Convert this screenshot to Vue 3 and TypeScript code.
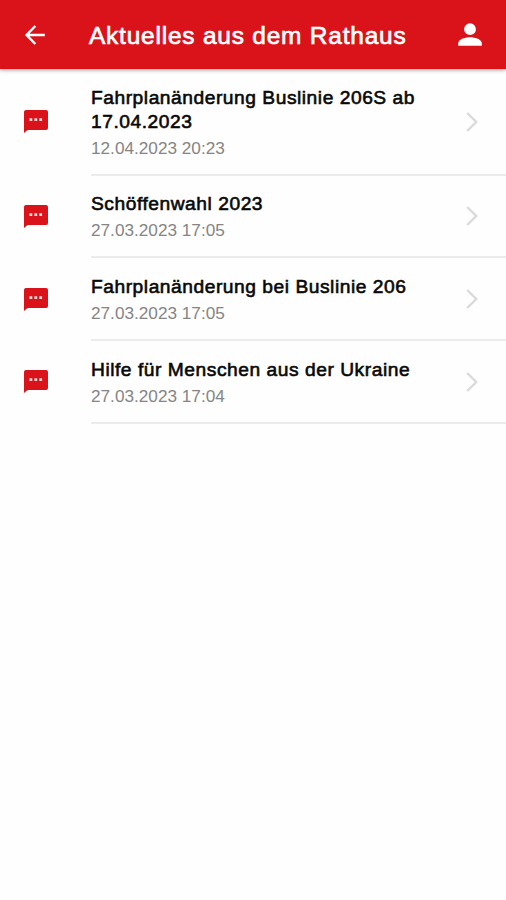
<script setup lang="ts">
interface NewsItem {
  id: number
  title: string
  date: string
}

const items: NewsItem[] = [
  { id: 1, title: 'Fahrplanänderung Buslinie 206S ab 17.04.2023', date: '12.04.2023 20:23' },
  { id: 2, title: 'Schöffenwahl 2023', date: '27.03.2023 17:05' },
  { id: 3, title: 'Fahrplanänderung bei Buslinie 206', date: '27.03.2023 17:05' },
  { id: 4, title: 'Hilfe für Menschen aus der Ukraine', date: '27.03.2023 17:04' },
]
</script>

<template>
  <div class="screen">
    <header class="bar">
      <button class="icon-button" aria-label="Zurück">
        <svg class="back" viewBox="0 0 22 22">
          <path d="M20.8 11H3M11.3 2L2.6 11L11.3 20" fill="none" stroke="currentColor" stroke-width="2.5" />
        </svg>
      </button>
      <h1 class="heading">Aktuelles aus dem Rathaus</h1>
      <button class="icon-button" aria-label="Profil">
        <svg class="person" viewBox="0 0 24 24">
          <circle cx="12" cy="6.2" r="5.9" fill="currentColor" />
          <path d="M0.2 22.7V20.3C0.2 16.5 6.5 14.3 12 14.3S23.8 16.5 23.8 20.3V22.7Z" fill="currentColor" />
        </svg>
      </button>
    </header>
    <ul class="list">
      <li v-for="item in items" :key="item.id" class="row">
        <svg class="bubble" viewBox="0 0 24 23">
          <path d="M2 0H22Q24 0 24 2V18Q24 20 22 20H3.5L0 23V2Q0 0 2 0Z" fill="#da121a" />
          <path d="M5.5 8.3H8.3V11H5.5ZM10.4 8.3H13.2V11H10.4ZM15.3 8.3H18.1V11H15.3Z" fill="#ffdcdc" />
        </svg>
        <div class="body">
          <div class="text">
            <h2 class="title">{{ item.title }}</h2>
            <p class="date">{{ item.date }}</p>
          </div>
          <svg class="chevron" viewBox="0 0 12 20">
            <path d="M1.2 1L10.2 10L1.2 19" fill="none" stroke="#dadadb" stroke-width="2.4" />
          </svg>
        </div>
      </li>
    </ul>
  </div>
</template>

<style>
body {
  margin: 0;
  background: #fefefe;
}
</style>

<style scoped>
.screen {
  min-height: 900px;
  background: #fefefe;
  font-family: "Liberation Sans", Arial, sans-serif;
}
.bar {
  display: flex;
  align-items: center;
  box-sizing: border-box;
  height: 69px;
  padding: 1px 24px 0;
  background: #da121a;
  color: #fff;
  box-shadow: 0 1px 4px rgba(0, 0, 0, 0.4);
}
.icon-button {
  display: flex;
  padding: 0;
  border: 0;
  background: none;
  color: inherit;
}
.back {
  width: 22px;
  height: 22px;
}
.person {
  width: 24px;
  height: 24px;
}
.heading {
  flex: 1;
  margin: 1px 0 0 43px;
  font-size: 24.4px;
  font-weight: 400;
  line-height: 30px;
  letter-spacing: 0.82px;
  white-space: nowrap;
  -webkit-text-stroke: 0.7px currentColor;
}
.list {
  margin: 0;
  padding: 0;
  list-style: none;
}
.row {
  display: flex;
  align-items: center;
  padding-left: 24px;
}
.bubble {
  flex: none;
  width: 24px;
  height: 23px;
  margin: 0 43px 1px 0;
}
.body {
  flex: 1;
  display: flex;
  align-items: center;
  box-sizing: border-box;
  padding: 16.8px 28px 15px 0;
  border-bottom: 2px solid #ececec;
}
.text {
  flex: 1;
}
.title {
  width: 345px;
  margin: 0;
  color: #080808;
  font-size: 19.2px;
  font-weight: 400;
  line-height: 23.9px;
  letter-spacing: 0.54px;
  -webkit-text-stroke: 0.6px currentColor;
}
.date {
  margin: 3px 0 0;
  color: #858585;
  font-size: 17.2px;
  line-height: 22px;
}
.chevron {
  flex: none;
  width: 12px;
  height: 20px;
  margin-top: -1px;
}
</style>
